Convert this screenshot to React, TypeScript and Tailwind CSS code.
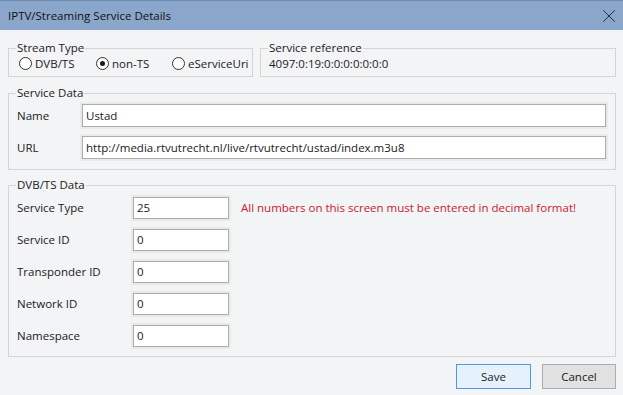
import { X } from "lucide-react";

const font = { fontFamily: '"Open Sans", "Noto Sans", sans-serif' };

function GroupBox({
  title,
  className = "",
  children,
}: {
  title: string;
  className?: string;
  children: React.ReactNode;
}) {
  return (
    <fieldset className={`min-w-0 border border-[#d4d4d4] pl-[8px] ${className}`}>
      <legend className="ml-[-1px] px-[1px] text-[11.5px] leading-[16px] text-[#1a1a1a]">{title}</legend>
      {children}
    </fieldset>
  );
}

function Radio({ label, checked, className = "" }: { label: string; checked?: boolean; className?: string }) {
  return (
    <label className={`flex shrink-0 items-center gap-[3px] whitespace-nowrap ${className}`}>
      <span className="flex h-[13px] w-[13px] shrink-0 items-center justify-center rounded-full border border-[#333] bg-white">
        {checked && <span className="h-[5px] w-[5px] rounded-full bg-[#1a1a1a]" />}
      </span>
      <span>{label}</span>
    </label>
  );
}

function TextBox({ value, className = "" }: { value: string; className?: string }) {
  return (
    <div
      className={`flex items-center border border-[#adadad] bg-white px-[3px] shadow-[0_0_0_2px_#e8e9eb] ${className}`}
    >
      {value}
    </div>
  );
}

const dvbRows = [
  { label: "Service Type", value: "25" },
  { label: "Service ID", value: "0" },
  { label: "Transponder ID", value: "0" },
  { label: "Network ID", value: "0" },
  { label: "Namespace", value: "0" },
];

export default function App() {
  return (
    <div className="flex h-[395px] w-[623px] flex-col bg-[#f3f4f6] text-[11.5px] text-[#1a1a1a]" style={font}>
      <div className="flex h-[30px] items-center justify-between border-t border-[#6f88ad] bg-[#8ba6cb] pl-[8px] pr-[3px]">
        <span className="text-[11.5px] text-[#111]">IPTV/Streaming Service Details</span>
        <X size={22} strokeWidth={1} className="text-[#222]" />
      </div>

      <div className="flex flex-col pl-[8px] pr-[7px] pt-[10px]">
        <div className="flex gap-[7px]">
          <GroupBox title="Stream Type" className="w-[245px] shrink-0 pb-[5px] pr-[2px]">
            <div className="flex h-[15px] items-center pl-[2px]">
              <Radio label="DVB/TS" className="w-[77px]" />
              <Radio label="non-TS" checked className="w-[76px]" />
              <Radio label="eServiceUri" />
            </div>
          </GroupBox>
          <GroupBox title="Service reference" className="flex-1 pb-[5px] pr-[8px]">
            <div className="flex h-[15px] items-center">4097:0:19:0:0:0:0:0:0:0</div>
          </GroupBox>
        </div>

        <GroupBox title="Service Data" className="mt-[8px] pb-[10px] pr-[9px]">
          <div className="flex flex-col gap-[9px] pt-[3px]">
            <div className="flex items-center">
              <span className="w-[65px]">Name</span>
              <TextBox value="Ustad" className="h-[23px] flex-1" />
            </div>
            <div className="flex items-center">
              <span className="w-[65px]">URL</span>
              <TextBox value="http://media.rtvutrecht.nl/live/rtvutrecht/ustad/index.m3u8" className="h-[23px] flex-1" />
            </div>
          </div>
        </GroupBox>

        <GroupBox title="DVB/TS Data" className="mt-[7px] pb-[9px] pr-[8px]">
          <div className="flex flex-col gap-[10px] pt-[4px]">
            {dvbRows.map((row, i) => (
              <div key={row.label} className="flex items-center">
                <span className="w-[116px]">{row.label}</span>
                <TextBox value={row.value} className="h-[22px] w-[96px]" />
                {i === 0 && (
                  <span className="ml-[12px] text-[#c8202e]">
                    All numbers on this screen must be entered in decimal format!
                  </span>
                )}
              </div>
            ))}
          </div>
        </GroupBox>

        <div className="mt-[7px] flex justify-end gap-[11px]">
          <button className="h-[25px] w-[75px] border border-[#4d9be6] bg-[#e5f1fb]">Save</button>
          <button className="h-[25px] w-[74px] border border-[#adadad] bg-[#e1e1e1]">Cancel</button>
        </div>
      </div>
    </div>
  );
}
